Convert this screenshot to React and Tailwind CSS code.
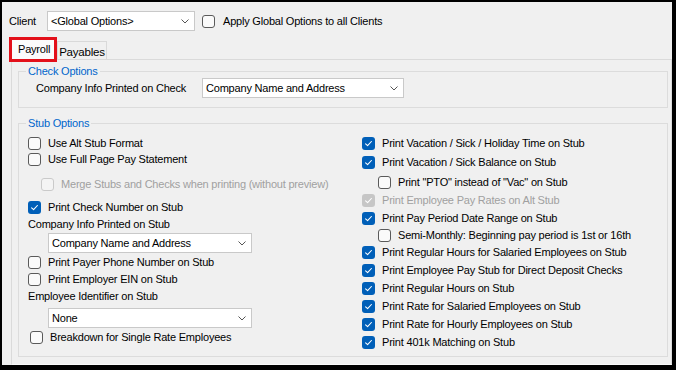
import React from 'react';

function Box({ checked = false, disabled = false }) {
  if (checked) {
    return (
      <span
        className={`flex h-[13px] w-[13px] shrink-0 items-center justify-center rounded-[3px] ${
          disabled ? 'bg-[#c6c6c6]' : 'bg-[#005fb8]'
        }`}
      >
        <svg width="9" height="9" viewBox="0 0 9 9" fill="none">
          <path d="M1.6 4.8 L3.6 6.6 L7.4 2.5" stroke="white" strokeWidth="1.1" strokeLinecap="round" strokeLinejoin="round" />
        </svg>
      </span>
    );
  }
  return (
    <span
      className={`h-[13px] w-[13px] shrink-0 rounded-[3px] border ${
        disabled ? 'border-[#cacaca] bg-[#f4f4f4]' : 'border-[#5a5a5a] bg-[#fafafa]'
      }`}
    />
  );
}

function Row({ label, checked, disabled, className = '' }) {
  return (
    <div className={`flex items-center gap-[7px] ${className}`}>
      <Box checked={checked} disabled={disabled} />
      <span className={disabled ? 'text-[#a0a0a0]' : ''}>{label}</span>
    </div>
  );
}

function Select({ value, className = '' }) {
  return (
    <div className={`flex h-[20px] items-center justify-between border border-[#c9c9c9] bg-white pl-[3px] pr-[5px] ${className}`}>
      <span>{value}</span>
      <svg width="8" height="5" viewBox="0 0 8 5" fill="none">
        <path d="M0.5 0.5 L4 4 L7.5 0.5" stroke="#555" strokeWidth="1" />
      </svg>
    </div>
  );
}

export default function App() {
  return (
    <div className="box-border flex h-[370px] w-[676px] flex-col border-t-[2px] border-l-[2px] border-r-[4px] border-b-[5px] border-black bg-[#f0f0f0] font-['Liberation_Sans',Arial,sans-serif] text-[11px] leading-[14px] tracking-[-0.2px] text-black">
      {/* Client row */}
      <div className="mt-[9px] flex h-[20px] items-center pl-[7px]">
        <span className="w-[38px]">Client</span>
        <Select value="<Global Options>" className="w-[148px]" />
        <div className="ml-[7px] flex items-center gap-[8px]">
          <Box />
          <span>Apply Global Options to all Clients</span>
        </div>
      </div>

      {/* Tabs */}
      <div className="mt-[6px] flex h-[22px] items-start pl-[7px]">
        <div className="relative z-10 flex h-[25px] w-[48px] items-center border-[3px] border-[#e3101a] bg-[#fbfbfb] pl-[6px] pb-[2px]">
          Payroll
        </div>
        <div className="mt-[4px] flex h-[18px] w-[50px] items-center justify-center border border-b-0 border-[#d9d9d9] bg-[#f0f0f0] pt-[2px] text-[11.5px]">
          Payables
        </div>
      </div>

      {/* Tab panel */}
      <div className="ml-[9px] flex-1 border border-[#dadada] border-b-[#fafafa] pl-[6px] pr-[3px] pt-[4px]">
        <fieldset className="border border-[#dcdcdc]">
          <legend className="ml-[7px] px-[2px] text-[#0066cc]">Check Options</legend>
          <div className="flex items-center pb-[9px] pl-[17px]">
            <span className="w-[166px]">Company Info Printed on Check</span>
            <Select value="Company Name and Address" className="w-[202px]" />
          </div>
        </fieldset>

        <fieldset className="mt-[8px] border border-[#dcdcdc]">
          <legend className="ml-[7px] px-[2px] text-[#0066cc]">Stub Options</legend>
          <div className="mt-[4px] grid grid-cols-[334px_1fr] pb-[5px] pl-[9px]">
            {/* Left column */}
            <div className="flex flex-col">
              <Row label="Use Alt Stub Format" className="mt-[1px] h-[16px]" />
              <Row label="Use Full Page Pay Statement" className="h-[16px]" />
              <Row
                label="Merge Stubs and Checks when printing (without preview)"
                disabled
                className="mt-[9px] h-[16px] pl-[13px]"
              />
              <Row label="Print Check Number on Stub" checked className="mt-[7px] h-[16px]" />
              <div className="mt-[1px] flex h-[16px] items-center">Company Info Printed on Stub</div>
              <Select value="Company Name and Address" className="ml-[20px] mt-[1px] w-[204px]" />
              <Row label="Print Payer Phone Number on Stub" className="mt-[1px] h-[16px]" />
              <Row label="Print Employer EIN on Stub" className="mt-[1px] h-[16px]" />
              <div className="mt-[1px] flex h-[16px] items-center">Employee Identifier on Stub</div>
              <Select value="None" className="ml-[20px] mt-[4px] w-[204px]" />
              <Row label="Breakdown for Single Rate Employees" className="mt-[1px] h-[16px] pl-[2px]" />
            </div>

            {/* Right column */}
            <div className="flex flex-col">
              <Row label="Print Vacation / Sick / Holiday Time on Stub" checked className="h-[18px]" />
              <Row label="Print Vacation / Sick Balance on Stub" checked className="mt-[1px] h-[18px]" />
              <Row label={'Print "PTO" instead of "Vac" on Stub'} className="mt-[2px] h-[18px] pl-[16px]" />
              <Row label="Print Employee Pay Rates on Alt Stub" checked disabled className="h-[18px]" />
              <Row label="Print Pay Period Date Range on Stub" checked className="h-[18px]" />
              <Row label="Semi-Monthly: Beginning pay period is 1st or 16th" className="h-[16px] pl-[16px]" />
              <Row label="Print Regular Hours for Salaried Employees on Stub" checked className="h-[18px]" />
              <Row label="Print Employee Pay Stub for Direct Deposit Checks" checked className="h-[18px]" />
              <Row label="Print Regular Hours on Stub" checked className="h-[18px]" />
              <Row label="Print Rate for Salaried Employees on Stub" checked className="h-[18px]" />
              <Row label="Print Rate for Hourly Employees on Stub" checked className="h-[18px]" />
              <Row label="Print 401k Matching on Stub" checked className="h-[18px]" />
            </div>
          </div>
        </fieldset>
      </div>
    </div>
  );
}
